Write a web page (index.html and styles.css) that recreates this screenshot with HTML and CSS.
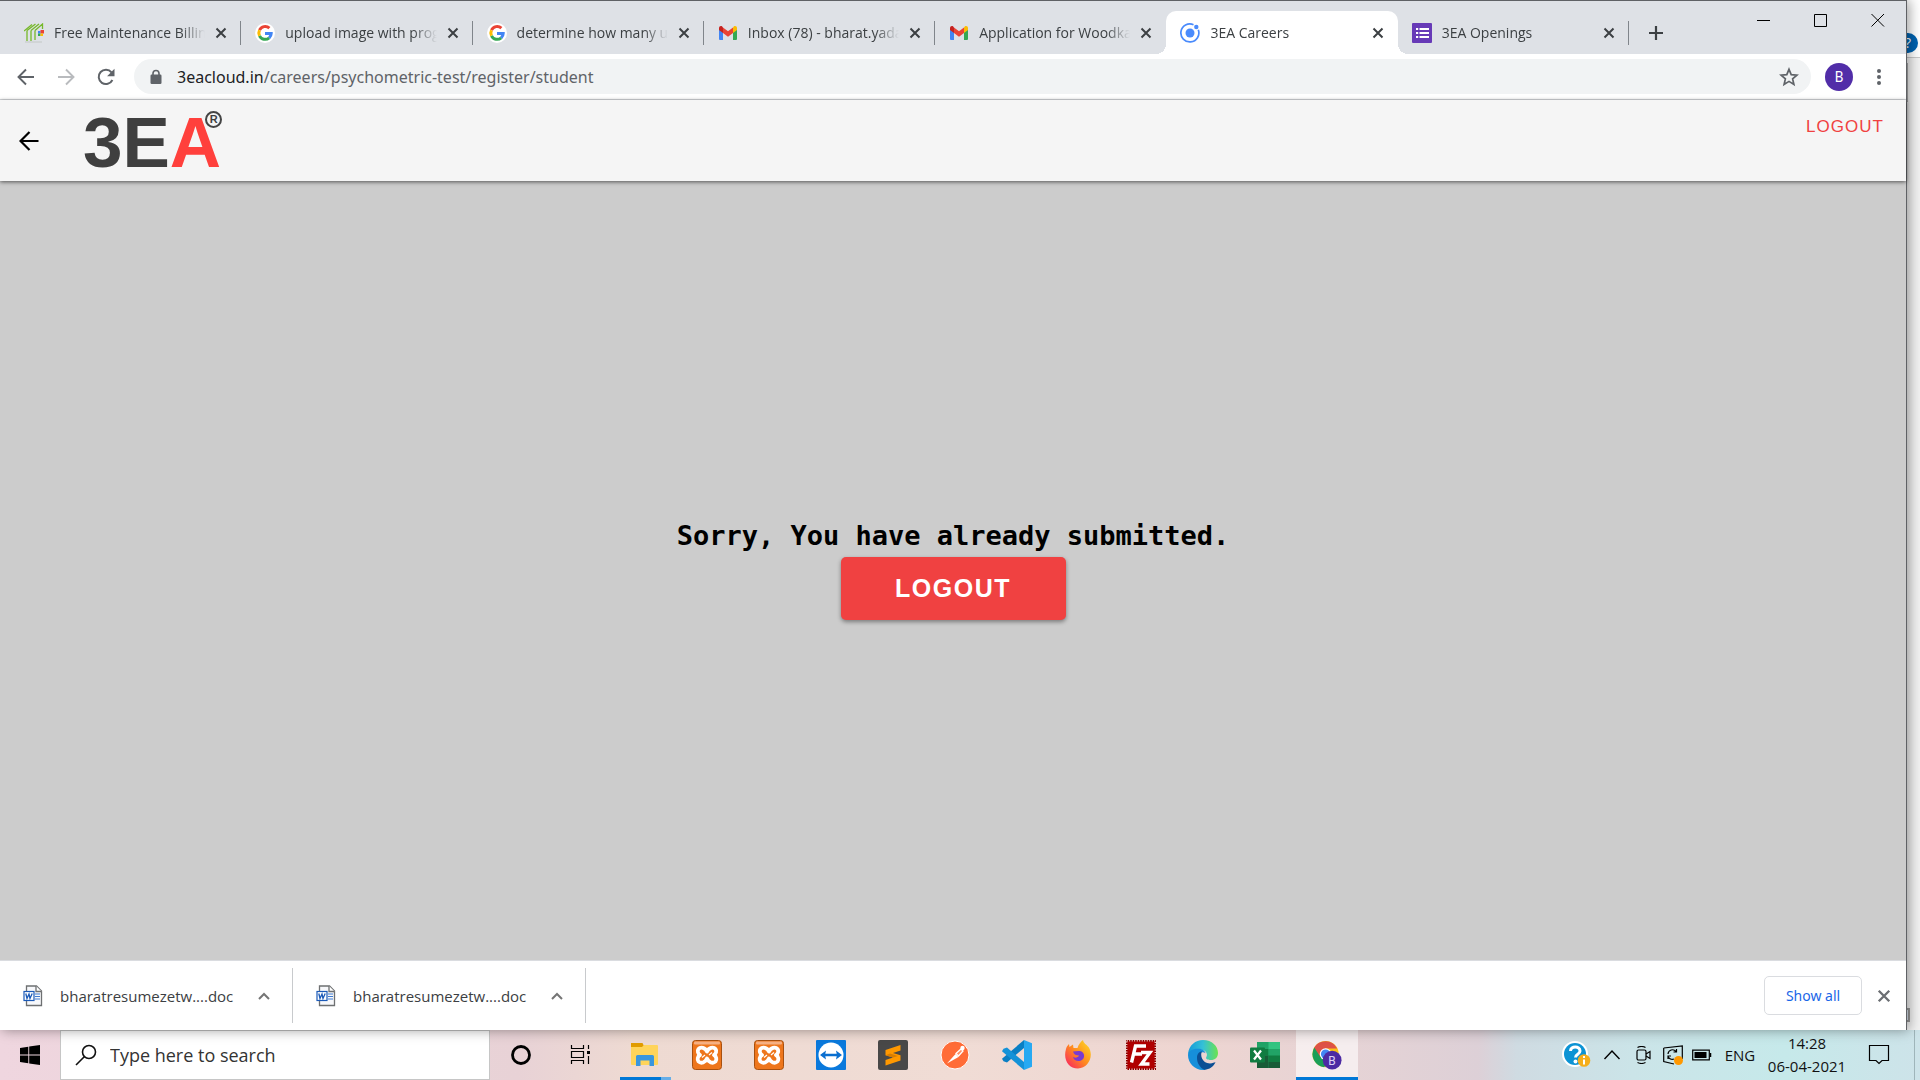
FILE: index.html
```html
<!DOCTYPE html>
<html lang="en">
<head>
<meta charset="utf-8">
<title>3EA Careers</title>
<link rel="stylesheet" href="styles.css">
</head>
<body>
<svg class="defs" aria-hidden="true">
  <defs>
    <symbol id="close" viewBox="0 0 12 12"><path d="M1.5 1.5l9 9M10.5 1.5l-9 9" stroke="currentColor" stroke-width="2" fill="none"/></symbol>
    <symbol id="google" viewBox="0 0 20 20">
      <circle cx="10" cy="10" r="10" fill="#fff"/>
      <g fill="none" stroke-width="3">
        <path d="M14.4 5.2A6.2 6.2 0 0 0 4.5 7.2" stroke="#ea4335"/>
        <path d="M4.5 7.2a6.2 6.2 0 0 0 0 5.6" stroke="#fbbc05"/>
        <path d="M4.5 12.8a6.2 6.2 0 0 0 9.7 2" stroke="#34a853"/>
        <path d="M14.2 14.8a6.2 6.2 0 0 0 2-4.4H10" stroke="#4285f4"/>
      </g>
    </symbol>
    <symbol id="gmail" viewBox="0 0 20 16">
      <path d="M1 3v11a1 1 0 0 0 1 1h3V7z" fill="#4285f4"/>
      <path d="M19 3v11a1 1 0 0 1-1 1h-3V7z" fill="#34a853"/>
      <path d="M15 2.5V8l4-3V3c0-2-2-2.500-3.200-1.600z" fill="#fbbc04"/>
      <path d="M5 2.500V8l5 3.800L15 8V2.500L10 6.200z" fill="#ea4335"/>
      <path d="M1 3v2l4 3V2.500L4.200 1.400C3 .5 1 1 1 3z" fill="#c5221f"/>
    </symbol>
    <symbol id="worddoc" viewBox="0 0 20 22">
      <path d="M3.500 1h10l5 5v14.500h-15z" fill="#f7f8fb" stroke="#6e7072" stroke-width="1.300"/>
      <path d="M13 1v5.500h5.500" fill="#fff" stroke="#6e7072" stroke-width="1.300"/>
      <path d="M12 9h5M12 11.500h5M12 14h5" stroke="#3f7bd0" stroke-width="1"/>
      <rect x="1" y="6.500" width="10" height="9" fill="#fff" stroke="#1b5ab8" stroke-width="1.200"/>
      <path d="M2.800 8.500l1.200 5 2-4.500 1 4.500 2.200-5" fill="none" stroke="#1b5ab8" stroke-width="1.300"/>
    </symbol>
    <symbol id="chevron" viewBox="0 0 12 8"><path d="M1 7l5-5 5 5" stroke="#757575" stroke-width="2" fill="none"/></symbol>
    <symbol id="xampp" viewBox="0 0 30 30">
      <rect x=".5" y=".5" width="29" height="29" rx="3" fill="#ee761c" stroke="#a8500f"/>
      <rect x="2" y="1.500" width="26" height="3" rx="1" fill="#f7b184"/>
      <path d="M15 11.500C13.500 7.500 8.500 6.500 6.500 9c-1.500 2-.5 4.500 1.500 6-2.500 1.500-3 4.500-1.500 6.500 2.500 2.500 7 1 8.500-3 1.500 4 6 5.500 8.500 3 1.500-2 1-5-1.500-6.500 2-1.500 3-4 1.500-6-2-2.500-7-1.500-8.500 2.500z" fill="none" stroke="#fff" stroke-width="3.800" stroke-linejoin="round"/>
      <path d="M13 15l-3 2.500M17 15l3-2.500" fill="none" stroke="#fff" stroke-width="1.200"/>
    </symbol>
  </defs>
</svg>

<div class="desktop">
  <div class="browser">
    <header class="tabstrip">
      <nav class="tabs" aria-label="Tabs">
        <div class="tab">
          <svg class="favicon" viewBox="0 0 20 20"><path d="M0 8l8-6.500M3 7.500V18M3 7.500L11.500 1M7 7.500V18M7 7.500L15 1M11 7.500V17M11 7.500L18.500 1v5" fill="none" stroke="#76b82a" stroke-width="1.300"/><path d="M14 8h2.500v2.500H14z" fill="#4285f4"/><path d="M16.500 7H20v3.500h-3.500z" fill="#ea4335"/><path d="M14 10.500h2.500V13H14z" fill="#34a853"/><path d="M16.500 10.500H19V13h-2.500z" fill="#fbbc05"/><path d="M1 19h17" stroke="#c3c8c6"/></svg>
          <a class="tab-title" href="#">Free Maintenance Billing Software</a>
          <button class="tab-close" aria-label="Close tab"><svg><use href="#close"/></svg></button>
        </div>
        <div class="tab">
          <svg class="favicon"><use href="#google"/></svg>
          <a class="tab-title" href="#">upload image with progress</a>
          <button class="tab-close" aria-label="Close tab"><svg><use href="#close"/></svg></button>
        </div>
        <div class="tab">
          <svg class="favicon"><use href="#google"/></svg>
          <a class="tab-title" href="#">determine how many users</a>
          <button class="tab-close" aria-label="Close tab"><svg><use href="#close"/></svg></button>
        </div>
        <div class="tab">
          <svg class="favicon"><use href="#gmail"/></svg>
          <a class="tab-title" href="#">Inbox (78) - bharat.yadav</a>
          <button class="tab-close" aria-label="Close tab"><svg><use href="#close"/></svg></button>
        </div>
        <div class="tab before-active">
          <svg class="favicon"><use href="#gmail"/></svg>
          <a class="tab-title" href="#">Application for Woodkart</a>
          <button class="tab-close" aria-label="Close tab"><svg><use href="#close"/></svg></button>
        </div>
        <div class="tab active">
          <svg class="favicon" viewBox="0 0 20 20"><path d="M18.300 6.800A9 9 0 1 1 13.500 1.700" fill="none" stroke="#4a8bfc" stroke-width="1.700"/><circle cx="10" cy="10" r="4.500" fill="#4a8bfc"/><circle cx="16.300" cy="4" r="2.200" fill="#4a8bfc"/></svg>
          <a class="tab-title" href="#">3EA Careers</a>
          <button class="tab-close" aria-label="Close tab"><svg><use href="#close"/></svg></button>
        </div>
        <div class="tab">
          <svg class="favicon" viewBox="0 0 20 20"><rect width="20" height="20" rx="1" fill="#673ab7"/><path d="M4 6h2.200M7.500 6H17M4 10h2.200M7.500 10H17M4 14h2.200M7.500 14H17" stroke="#fff" stroke-width="2.200"/></svg>
          <a class="tab-title" href="#">3EA Openings</a>
          <button class="tab-close" aria-label="Close tab"><svg><use href="#close"/></svg></button>
        </div>
      </nav>
      <button class="new-tab" aria-label="New tab"><svg viewBox="0 0 16 16"><path d="M8 1v14M1 8h14" stroke="#3c4043" stroke-width="2.200"/></svg></button>
      <div class="captions">
        <button aria-label="Minimize"><svg viewBox="0 0 14 14"><path d="M0 7.500h13" stroke="#000"/></svg></button>
        <button aria-label="Maximize"><svg viewBox="0 0 14 14"><path d="M.5 1.500h12v12H.5z" fill="none" stroke="#000"/></svg></button>
        <button aria-label="Close"><svg viewBox="0 0 14 14"><path d="M.5 1l12.500 12.500M13 1L.5 13.500" stroke="#000"/></svg></button>
      </div>
    </header>

    <div class="toolbar">
      <button class="tool" aria-label="Back"><svg viewBox="0 0 20 20"><path d="M18 10H3M10 2.500L2.500 10l7.500 7.500" fill="none" stroke="#5f6368" stroke-width="1.900"/></svg></button>
      <button class="tool" aria-label="Forward"><svg viewBox="0 0 20 20"><path d="M2 10h15M10 2.500l7.500 7.500-7.500 7.500" fill="none" stroke="#b9bbbe" stroke-width="1.900"/></svg></button>
      <button class="tool" aria-label="Reload"><svg viewBox="0 0 20 20"><path d="M16.400 13A7.200 7.200 0 1 1 15.500 5.300" fill="none" stroke="#5f6368" stroke-width="2"/><path d="M18.500 1.800v7.400h-7.400z" fill="#5f6368"/></svg></button>
      <div class="omnibox">
        <svg class="lock" viewBox="0 0 12 16"><path d="M3 7V4.500a3 3 0 0 1 6 0V7" fill="none" stroke="#5f6368" stroke-width="1.600"/><rect x=".5" y="5.500" width="11" height="9.500" rx="1.200" fill="#5f6368"/></svg>
        <div class="address" role="textbox" aria-label="Address" contenteditable="true" spellcheck="false"><span class="host">3eacloud.in</span>/careers/psychometric-test/register/student</div>
        <button class="star" aria-label="Bookmark"><svg viewBox="0 0 20 20"><path d="M10 2.300l2.200 5.300 5.700.5-4.300 3.700 1.300 5.600-4.900-3-4.900 3 1.300-5.600L2.100 8.100l5.700-.5z" fill="none" stroke="#5f6368" stroke-width="1.700"/></svg></button>
      </div>
      <button class="avatar" aria-label="Profile">B</button>
      <button class="tool menu" aria-label="Menu"><svg viewBox="0 0 20 20"><g fill="#5f6368"><circle cx="10" cy="4" r="2"/><circle cx="10" cy="10" r="2"/><circle cx="10" cy="16" r="2"/></g></svg></button>
    </div>

    <div class="app-bar">
      <button class="app-back" aria-label="Go back"><svg viewBox="0 0 20 20"><path d="M19.500 10H2M10.500 1L1.500 10l9 9" fill="none" stroke="#000" stroke-width="2.200"/></svg></button>
      <div class="logo">3E<span class="logo-a">A</span><span class="logo-mark">R</span></div>
      <a class="app-logout" href="#">LOGOUT</a>
    </div>

    <main class="content">
      <h1 class="message">Sorry, You have already submitted.</h1>
      <button class="logout">LOGOUT</button>
    </main>

    <section class="downloads" aria-label="Downloads">
      <div class="download">
        <svg class="doc"><use href="#worddoc"/></svg>
        <span class="filename">bharatresumezetw....doc</span>
        <button class="more" aria-label="Options"><svg><use href="#chevron"/></svg></button>
      </div>
      <div class="download">
        <svg class="doc"><use href="#worddoc"/></svg>
        <span class="filename">bharatresumezetw....doc</span>
        <button class="more" aria-label="Options"><svg><use href="#chevron"/></svg></button>
      </div>
      <button class="show-all">Show all</button>
      <button class="bar-close" aria-label="Close downloads"><svg><use href="#close"/></svg></button>
    </section>
  </div>

  <aside class="behind">
    <span class="behind-help">?</span>
    <span class="behind-scroll"></span>
    <span class="behind-status"></span>
  </aside>
</div>

<footer class="taskbar">
  <button class="start" aria-label="Start"><svg viewBox="0 0 20 20"><path d="M0 3l8.300-1.200v7.800H0zM9.200 1.600L20 0v9.600H9.200zM0 10.400h8.300v7.800L0 17zM9.200 10.400H20V20L9.200 18.400z" fill="#000"/></svg></button>
  <label class="search">
    <svg viewBox="0 0 22 22"><circle cx="14" cy="8" r="6.500" fill="none" stroke="#111" stroke-width="1.600"/><path d="M9.500 12.500L1 21" stroke="#111" stroke-width="1.600"/></svg>
    <input type="text" placeholder="Type here to search" aria-label="Type here to search">
  </label>
  <nav class="apps" aria-label="Applications">
    <button class="app" aria-label="Cortana"><svg viewBox="0 0 30 30"><circle cx="15" cy="15" r="8.500" fill="none" stroke="#000" stroke-width="2.800"/></svg></button>
    <button class="app" aria-label="Task view"><svg viewBox="0 0 30 30"><path d="M3.500 5v3.500h12V5M3.500 24v-3.500h12V24M3.500 11.500h12v6h-12zM20.500 5v4M20.500 16v8" fill="none" stroke="#000" stroke-width="1.200"/><path d="M19 11h3v3h-3z" fill="#000"/></svg></button>
    <button class="app grouped" aria-label="File Explorer"><svg viewBox="0 0 30 30"><path d="M1 3h11.500l1.500 3-1.500 2H1z" fill="#e19c00"/><path d="M1 7h11l2-2h13a1 1 0 0 1 1 1v18a1 1 0 0 1-1 1H2a1 1 0 0 1-1-1z" fill="#ffd45a"/><path d="M6 26V16.500A1.500 1.500 0 0 1 7.500 15h15a1.500 1.500 0 0 1 1.500 1.500V26h-4.500v-5.500h-9V26z" fill="#3a96dd"/></svg></button>
    <button class="app" aria-label="XAMPP"><svg><use href="#xampp"/></svg></button>
    <button class="app" aria-label="XAMPP Control"><svg><use href="#xampp"/></svg></button>
    <button class="app" aria-label="TeamViewer"><svg viewBox="0 0 30 30"><rect width="30" height="30" rx="1" fill="#0a79dc"/><circle cx="15" cy="15" r="12.500" fill="#fff"/><path d="M4 15l6-4.500-.7 3.200h11.400l-.7-3.200 6 4.500-6 4.500.7-3.200H9.300l.7 3.200z" fill="#0a6fd0"/></svg></button>
    <button class="app" aria-label="Sublime Text"><svg viewBox="0 0 30 30"><rect width="30" height="30" rx="2" fill="#484848"/><path d="M22.500 5v5.500l-7.500 2.400 7.500 2.400v5.200L7.500 25.500V20l7.500-2.400-7.500-2.400V10z" fill="#ff9800"/><path d="M7.500 15.200l7.500 2.400 5-1.600-8-2.600z" fill="#d97d00"/></svg></button>
    <button class="app" aria-label="Postman"><svg viewBox="0 0 30 30"><circle cx="15" cy="15" r="14" fill="#ff6c37" stroke="#fff"/><path d="M7 23.500l8.500-9.500 3 3z" fill="#fff"/><path d="M16 13.500l5-4.500 2 2-4.500 5z" fill="#ff8d63" stroke="#fff" stroke-width="1.300"/><circle cx="22.500" cy="8" r="2.200" fill="#fff"/></svg></button>
    <button class="app" aria-label="Visual Studio Code"><svg viewBox="0 0 30 30"><path d="M22 0v8L5 22.500l-3.500-1.300L0 18.800z" fill="#0a7fc4"/><path d="M22 30v-8L5 7.500 1.500 8.800 0 11.200z" fill="#1492d8"/><path d="M22 0l8 3.300v23.400L22 30z" fill="#27a9f2"/></svg></button>
    <button class="app" aria-label="Firefox"><svg viewBox="0 0 30 30"><defs><linearGradient id="fire" x1="1" y1="0" x2="0" y2="1"><stop offset="0" stop-color="#ffe226"/><stop offset=".5" stop-color="#ff8a1f"/><stop offset="1" stop-color="#f8166b"/></linearGradient></defs><path d="M2 9c.5-2 1.500-3.500 3-5l.5 3L9 4.500l.5 3.500h4c1-3.500 3-6 5.500-8 .5 3.500 3.500 4.500 5.500 7 6 9-.5 21.500-10.500 21.500S-1 19 2 9z" fill="url(#fire)"/><path d="M9 11.500l5.500-.5c5-1 7.500 5.500 4 8.500s-8.500 1.500-9.500-2.500c2.500 1.500 5 .5 6-1.500-3 0-5-1-6-4z" fill="#7a3bd0"/></svg></button>
    <button class="app" aria-label="FileZilla"><svg viewBox="0 0 30 30"><rect x=".7" y=".7" width="28.600" height="28.600" fill="#b00000" stroke="#8a0000" stroke-width="1.400"/><rect x=".7" y=".7" width="28.600" height="28.600" fill="none" stroke="#f2d6d2" stroke-width="1.400" stroke-dasharray="1 1.500"/><path d="M5.500 22.500L9.500 6H20M7.500 14h8.500M15 12.500h9l-8.500 11.500h8" fill="none" stroke="#fff" stroke-width="3.400"/></svg></button>
    <button class="app" aria-label="Edge"><svg viewBox="0 0 30 30"><defs><linearGradient id="wave"><stop offset="0" stop-color="#169ad8"/><stop offset=".5" stop-color="#35c1d8"/><stop offset="1" stop-color="#6be34f"/></linearGradient></defs><path d="M0 14C1 5 7.500 0 15 0c9 0 15 6 15 13 0 4.500-3 7-7 7-3 0-5.500-1-4.800-2.800 2.300-3.200-.7-7.400-5.200-7.400C6.500 9.800 2 13 0 14z" fill="url(#wave)"/><path d="M0 15c0-4 5-6.500 10-6.300 4 0 7 2 7.500 4.500-3-2.500-7 0-7.500 4-.5 5 2 10 8 12.500C8 31.500 0 24 0 15z" fill="#168fda"/><path d="M9 18c0-4 2-6.500 5-6.500-2 2.500-.5 12 8 12 3 0 4.500-1.500 5.500-1.200-2 4.500-6 7.200-11 7.500C12 28 9 23 9 18z" fill="#0c4f94"/></svg></button>
    <button class="app" aria-label="Excel"><svg viewBox="0 0 30 30"><path d="M7 2h23v26H7z" fill="#21a366"/><path d="M18.500 2H30v7H18.500z" fill="#33c481"/><path d="M7 9h11.500v6.500H7z" fill="#107c41"/><path d="M18.500 9H30v6.500H18.500z" fill="#21a366"/><path d="M7 15.500h11.500V28H7z" fill="#185c37"/><path d="M18.500 15.500H30V22H18.500z" fill="#107c41"/><path d="M18.500 22H30v6H18.500z" fill="#185c37"/><rect y="7.500" width="15" height="15" rx="1" fill="#107c41"/><path d="M4 10.500l7 9M11 10.500l-7 9" stroke="#fff" stroke-width="2.200"/></svg></button>
    <button class="app current" aria-label="Chrome"><svg viewBox="0 0 32 32"><circle cx="14.500" cy="15" r="14" fill="#fbc116"/><path d="M14.500 15L2.400 8A14 14 0 0 0 13 29l5-9z" fill="#1a9f58"/><path d="M2.400 8a14 14 0 0 1 24.400 1H14.500L9 18z" fill="#de5246"/><circle cx="14.500" cy="15" r="6.300" fill="#fff"/><circle cx="14.500" cy="15" r="5" fill="#4285f4"/><circle cx="21.500" cy="21.500" r="10" fill="#4c2aa3"/></svg><span class="app-badge">B</span></button>
  </nav>
  <div class="tray">
    <button class="tray-help" aria-label="Help"><svg viewBox="0 0 30 30"><circle cx="14" cy="14" r="13" fill="#fff"/><circle cx="14" cy="14" r="11" fill="#0c93d4"/><path d="M9.500 11c0-5.500 9.500-5.500 9.500 0 0 3.500-4.500 3-4.500 6.500" fill="none" stroke="#fff" stroke-width="3"/><circle cx="14.500" cy="21.500" r="2" fill="#fff"/><circle cx="23" cy="20.500" r="6.300" fill="#f5ae1b"/><path d="M23 19.500v5M23 16v2" stroke="#fff" stroke-width="2"/></svg></button>
    <button class="tray-caret" aria-label="Hidden icons"><svg viewBox="0 0 18 18"><path d="M1.500 13L9 5l7.500 8" fill="none" stroke="#000" stroke-width="1.400"/></svg></button>
    <button class="tray-cam" aria-label="Meet now"><svg viewBox="0 0 18 18"><rect x="2" y="4" width="9" height="10" rx="1.500" fill="none" stroke="#000" stroke-width="1.200"/><path d="M11 8l4-2.500v7L11 10M2.500 1.500Q6.500-.5 10.500 1.500M2.500 16.500q4 2 8 0" fill="none" stroke="#000" stroke-width="1.200"/></svg></button>
    <button class="tray-sync" aria-label="Updates"><svg viewBox="0 0 20 20"><path d="M.7 3L19.300 1v13M11 19L.7 16.500V3" fill="none" stroke="#000" stroke-width="1.200"/><path d="M5 9a4.500 4.500 0 0 1 8-2.500M13.500 4v3h-3M5 14v-3h3M5 11.500a4.500 4.500 0 0 0 6 2.500" fill="none" stroke="#000" stroke-width="1.200"/><circle cx="15.500" cy="15.500" r="4.500" fill="#ff9800"/></svg></button>
    <button class="tray-battery" aria-label="Battery"><svg viewBox="0 0 20 12"><path d="M.7 1.200h16.600v9.600H.7z" fill="none" stroke="#000" stroke-width="1.200"/><path d="M2.500 3h12v6h-12z" fill="#000"/><path d="M18.500 4v4" stroke="#000" stroke-width="1.500"/></svg></button>
    <button class="tray-lang">ENG</button>
    <button class="tray-clock"><span>14:28</span><span>06-04-2021</span></button>
    <button class="tray-note" aria-label="Notifications"><svg viewBox="0 0 22 22"><path d="M1.500 1.500h19v15H14l-3 3-3-3H1.500z" fill="none" stroke="#000" stroke-width="1.200"/></svg></button>
    <button class="peek" aria-label="Show desktop"></button>
  </div>
</footer>
</body>
</html>
```
FILE: styles.css
```css
* { box-sizing: border-box; }

body {
  margin: 0;
  min-height: 100vh;
  display: flex;
  flex-direction: column;
  font-family: "Open Sans", "Noto Sans", sans-serif;
  font-size: 14px;
  color: #3c4043;
}

button {
  padding: 0;
  border: 0;
  background: none;
  font: inherit;
  color: inherit;
  display: flex;
  align-items: center;
  justify-content: center;
}

a { color: inherit; text-decoration: none; }
svg { display: block; flex: none; }
.defs { position: absolute; width: 0; height: 0; }

.desktop { flex: 1; display: flex; }

.browser {
  flex: 1;
  min-width: 0;
  display: flex;
  flex-direction: column;
  border-top: 1px solid #5f6165;
  border-right: 1px solid #5f6165;
  box-shadow: 2px 0 12px rgba(0, 0, 0, .4);
  z-index: 1;
}

/* Tab strip */
.tabstrip {
  height: 53px;
  display: flex;
  align-items: flex-end;
  background: #dee1e6;
  padding-left: 10px;
}
.tabs { flex: 1; min-width: 0; display: flex; }
.tab {
  position: relative;
  flex: 1 1 0;
  min-width: 0;
  height: 43px;
  padding: 0 14px;
  display: flex;
  align-items: center;
  gap: 10px;
}
.tab::after {
  content: "";
  position: absolute;
  right: 0;
  top: 10px;
  width: 1px;
  height: 24px;
  background: #80858b;
}
.tab.active::after, .tab.before-active::after { display: none; }
.tab.active {
  background: #fff;
  border-radius: 10px 10px 0 0;
}
.tab.active::before {
  content: "";
  position: absolute;
  left: -10px;
  right: -10px;
  bottom: 0;
  height: 10px;
  background:
    radial-gradient(circle at 0 0, transparent 10px, #fff 10px) left / 10px 10px no-repeat,
    radial-gradient(circle at 100% 0, transparent 10px, #fff 10px) right / 10px 10px no-repeat;
}
.favicon { width: 20px; height: 20px; }
.tab-title {
  flex: 1;
  min-width: 0;
  overflow: hidden;
  white-space: nowrap;
  line-height: 20px;
  mask-image: linear-gradient(to left, transparent, #000 24px);
}
.tab-close { width: 12px; height: 20px; }
.tab-close svg { width: 12px; height: 12px; }
.new-tab { flex: none; width: 54px; height: 43px; }
.new-tab svg { width: 16px; height: 16px; }
.captions { flex: none; display: flex; align-self: flex-start; margin-left: 52px; }
.captions button { width: 57px; height: 37px; }
.captions svg { width: 14px; height: 14px; }

/* Toolbar */
.toolbar {
  height: 46px;
  padding: 0 7px 0 6px;
  display: flex;
  align-items: center;
  background: #fff;
  border-bottom: 1px solid #d8dadd;
}
.tool { width: 40px; height: 36px; }
.tool svg { width: 20px; height: 20px; }
.omnibox {
  flex: 1;
  height: 35px;
  margin-left: 8px;
  padding: 0 12px 0 16px;
  display: flex;
  align-items: center;
  gap: 15px;
  border-radius: 18px;
  background: #f1f3f4;
}
.lock { width: 12px; height: 16px; }
.address {
  flex: 1;
  font-family: "Noto Sans", sans-serif;
  font-size: 16px;
  line-height: 24px;
  color: #5f6368;
  outline: none;
}
.host { color: #202124; }
.star svg { width: 20px; height: 20px; }
.avatar {
  width: 28px;
  height: 28px;
  margin: 0 6px 0 14px;
  border-radius: 50%;
  background: #512da8;
  color: #fff;
  font-family: Roboto, sans-serif;
}

/* Application bar */
.app-bar {
  position: relative;
  height: 81px;
  padding: 0 22px 0 19px;
  display: flex;
  align-items: center;
  background: #f5f5f5;
  box-shadow: 0 1px 4px rgba(0, 0, 0, .6);
}
.app-back svg { width: 20px; height: 20px; }
.logo {
  position: relative;
  margin: 4px 0 0 44px;
  font: bold 71px/80px "Liberation Sans", Arial, sans-serif;
  color: #3f3f3f;
}
.logo-a { color: #ff403c; }
.logo-mark {
  position: absolute;
  right: -1px;
  top: 8px;
  width: 17px;
  height: 17px;
  border: 2px solid #444;
  border-radius: 50%;
  font-size: 11px;
  line-height: 13px;
  text-align: center;
}
.app-logout {
  margin-left: auto;
  align-self: flex-start;
  padding-top: 17px;
  font: 17px/20px "Liberation Sans", Arial, sans-serif;
  letter-spacing: .06em;
  color: #f04141;
}

/* Page content */
.content {
  flex: 1;
  display: flex;
  flex-direction: column;
  align-items: center;
  justify-content: center;
  background: #ccc;
}
.message {
  margin: 0 0 7px;
  font: bold 27px/28px "DejaVu Sans Mono", monospace;
  color: #000;
}
.logout {
  min-width: 225px;
  height: 63px;
  border-radius: 5px;
  background: #f04141;
  box-shadow: 0 2px 4px rgba(0, 0, 0, .4);
  font: bold 25px/30px "Liberation Sans", Arial, sans-serif;
  letter-spacing: .06em;
  color: #fff;
}

/* Downloads bar */
.downloads {
  height: 70px;
  padding-right: 15px;
  display: flex;
  align-items: center;
  background: #fff;
  border-top: 1px solid #dadce0;
}
.download {
  width: 293px;
  height: 55px;
  padding: 0 20px 0 23px;
  display: flex;
  align-items: center;
  border-right: 1px solid #c8cacd;
}
.doc { width: 20px; height: 22px; }
.filename { flex: 1; margin-left: 17px; font-size: 15px; line-height: 20px; }
.more { width: 16px; height: 20px; }
.more svg { width: 12px; height: 8px; }
.show-all {
  width: 98px;
  height: 39px;
  margin-left: auto;
  border: 1px solid #dadce0;
  border-radius: 5px;
  font-family: "Noto Sans", sans-serif;
  color: #1a66e8;
}
.bar-close { width: 14px; height: 20px; margin-left: 15px; color: #6b6e72; }
.bar-close svg { width: 14px; height: 14px; }

/* Window that shows behind the browser */
.behind {
  position: relative;
  width: 13px;
  overflow: hidden;
  background: linear-gradient(#fff 57px, #c9c9c9 57px, #c9c9c9 58px, #f2f2f2 58px);
}
.behind-help {
  position: absolute;
  left: -9px;
  top: 33px;
  width: 20px;
  height: 20px;
  border-radius: 50%;
  background: #0063b1;
  color: #fff;
  line-height: 20px;
  text-align: center;
}
.behind-scroll {
  position: absolute;
  left: -4px;
  top: 63px;
  width: 5px;
  height: 39px;
  border: 1px solid #aaa;
}
.behind-status {
  position: absolute;
  left: -10px;
  bottom: 8px;
  width: 13px;
  height: 14px;
  border: 2px solid #999;
  background: #dce6f2;
}

/* Taskbar */
.taskbar {
  height: 50px;
  display: flex;
  background: linear-gradient(90deg, #efd6df 0, #e8d2d6 27%, #eedad2 33%, #f0dcd5 50%, #eed5d1 62%, #e6d3d5 70%, #ddd0d7 77%, #cfdbe2 79%, #cbe4e8 85%, #c6e9ea 93%, #cde3e9 100%);
  color: #111;
}
.start { width: 60px; }
.start svg { width: 20px; height: 20px; }
.search {
  width: 430px;
  padding-left: 14px;
  display: flex;
  align-items: center;
  gap: 13px;
  background: #fff;
  border: 1px solid #c6c6c6;
}
.search svg { width: 22px; height: 22px; }
.search input {
  flex: 1;
  min-width: 0;
  padding: 0;
  border: 0;
  outline: none;
  background: none;
  font: 18px/24px "Open Sans", "Noto Sans", sans-serif;
  color: #333;
}
.search input::placeholder { color: #333; opacity: 1; }
.apps { display: flex; }
.app { position: relative; width: 62px; }
.app svg { width: 30px; height: 30px; }
.grouped::after, .current::after {
  content: "";
  position: absolute;
  left: 6px;
  right: 5px;
  bottom: 0;
  height: 3px;
  background: linear-gradient(90deg, #0078d7 80%, #66aee8 80%);
}
.current { background: rgba(255, 255, 255, .6); }
.current::after { left: 0; right: 0; background: #0078d7; }
.app-badge {
  position: absolute;
  left: 26px;
  top: 20px;
  width: 20px;
  line-height: 22px;
  text-align: center;
  color: #ddd3f5;
  font-family: Roboto, sans-serif;
  font-size: 12px;
}
.tray { margin-left: auto; display: flex; font-size: 15px; }
.tray-help, .tray-caret { width: 36px; }
.tray-help svg { width: 30px; height: 30px; }
.tray-caret svg, .tray-cam svg { width: 18px; height: 18px; }
.tray-cam, .tray-battery { width: 28px; }
.tray-sync { width: 30px; }
.tray-sync svg { width: 20px; height: 20px; }
.tray-battery svg { width: 20px; height: 12px; }
.tray-lang { width: 48px; }
.tray-clock { width: 86px; flex-direction: column; line-height: 23px; }
.tray-note { width: 58px; }
.tray-note svg { width: 22px; height: 22px; }
.peek { width: 6px; margin-left: 6px; border-left: 1px solid #9fb5ba; }
```
